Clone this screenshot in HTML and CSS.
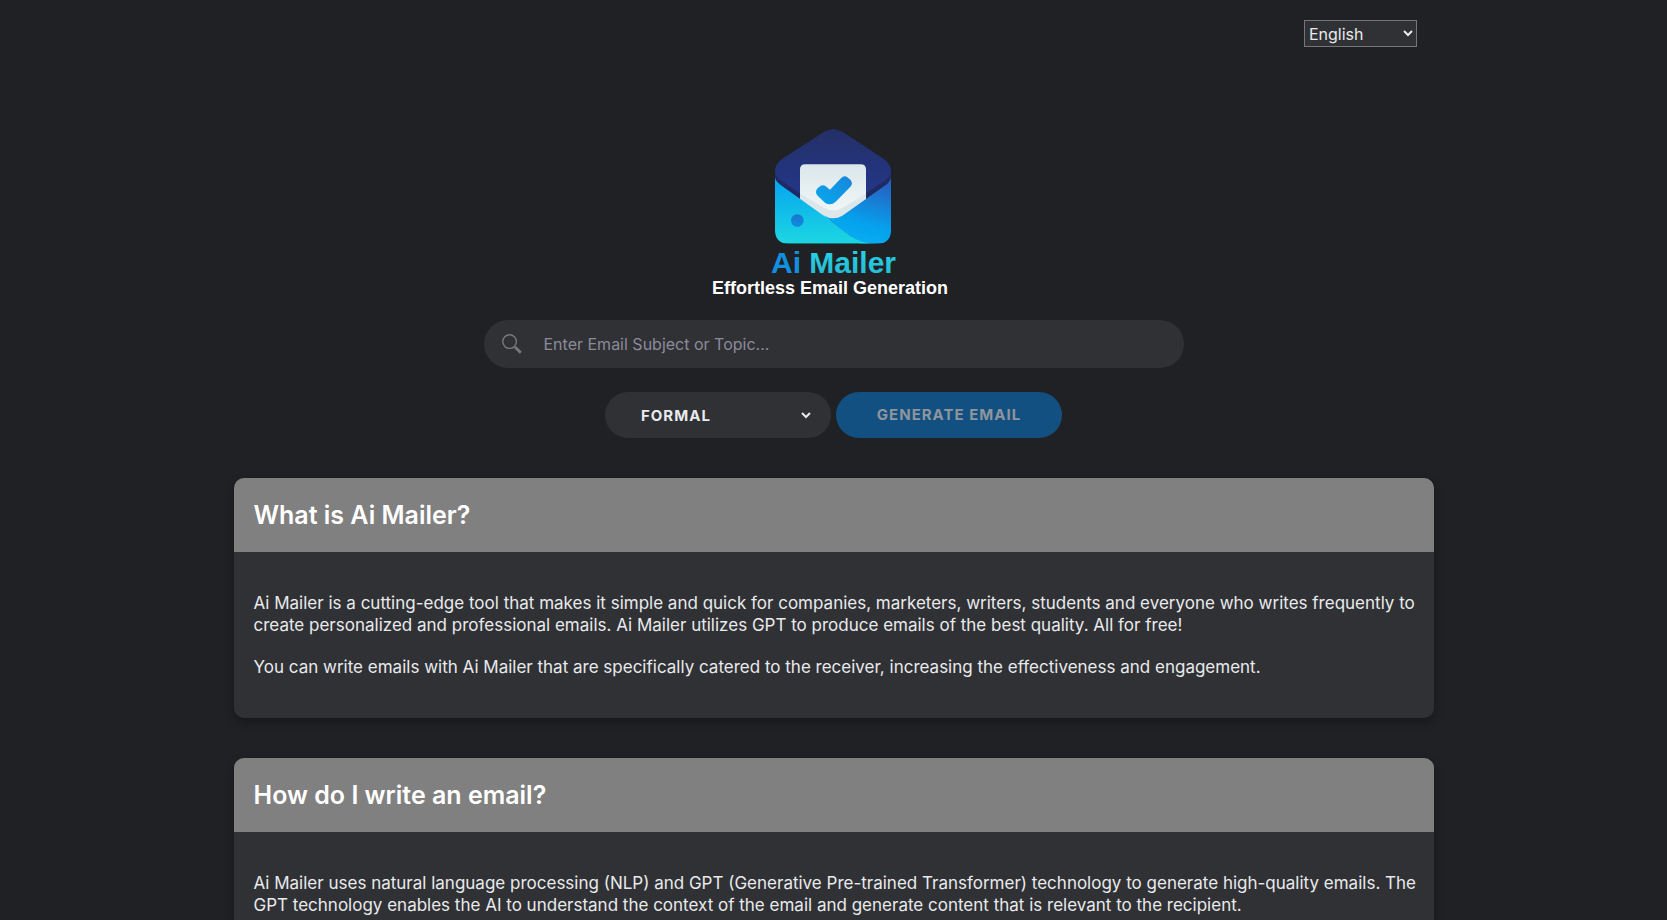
FILE: index.html
```html
<!DOCTYPE html>
<html lang="en">
<head>
    <meta charset="UTF-8">
    <meta name="viewport" content="width=device-width, initial-scale=1.0">
    <title>Ai Mailer</title>
    <link rel="stylesheet" href="styles.css">
</head>
<body>
    <header class="top-bar">
        <select class="language" aria-label="Language">
            <option>English</option>
            <option>Español</option>
            <option>Français</option>
            <option>Deutsch</option>
        </select>
    </header>

    <main class="container">
        <svg class="logo" width="270" height="200" viewBox="0 0 270 200" role="img" aria-label="Ai Mailer">
            <defs>
                <linearGradient id="flap" x1="0" y1="0" x2="0" y2="1">
                    <stop offset="0" stop-color="#233067"/>
                    <stop offset="1" stop-color="#24378f"/>
                </linearGradient>
                <linearGradient id="paper" x1="0" y1="0" x2="0" y2="1">
                    <stop offset="0" stop-color="#dbe7ea"/>
                    <stop offset="1" stop-color="#f4f9fa"/>
                </linearGradient>
                <linearGradient id="front" x1="0" y1="0" x2="0" y2="1">
                    <stop offset="0" stop-color="#04a2ef"/>
                    <stop offset="1" stop-color="#1dd7e2"/>
                </linearGradient>
                <linearGradient id="side" x1="0.8" y1="0" x2="0.5" y2="1">
                    <stop offset="0.1" stop-color="#2465c4"/>
                    <stop offset="0.7" stop-color="#05a2ee"/>
                    <stop offset="1" stop-color="#08aef0"/>
                </linearGradient>
                <linearGradient id="check" x1="0" y1="1" x2="1" y2="0">
                    <stop offset="0" stop-color="#06a9ed"/>
                    <stop offset="1" stop-color="#1a86da"/>
                </linearGradient>
                <linearGradient id="dot" x1="0" y1="0" x2="0" y2="1">
                    <stop offset="0" stop-color="#1976cd"/>
                    <stop offset="1" stop-color="#0d8de0"/>
                </linearGradient>
                <linearGradient id="word" x1="0" y1="0" x2="0" y2="1">
                    <stop offset="0" stop-color="#25d4e6"/>
                    <stop offset="1" stop-color="#27b8d2"/>
                </linearGradient>
                <clipPath id="body">
                    <path d="M225 180H573V359Q573 401 531 401H267Q225 401 225 359Z"/>
                </clipPath>
            </defs>
            <svg x="76" y="19" width="116" height="115" viewBox="225 57 348 344">
                <path fill="#1f2a63" d="M373 65Q400 50 427 65L548 144Q573 160 573 188V215L430 320H368L225 215V188Q225 160 250 144Z"/>
                <path fill="url(#flap)" d="M373 65Q400 50 427 65L548 144Q573 160 573 183Q573 199 552 213L498 249V290H300V249L246 213Q225 199 225 183Q225 160 250 144Z"/>
                <path fill="url(#paper)" d="M300 178Q300 162 316 162H482Q498 162 498 178V270L430 330H368L300 270Z"/>
                <path fill="#dde7e9" d="M300 250L370 291Q400 309 430 291L498 250V275L430 330H368L300 275Z"/>
                <path fill="url(#check)" d="M353 234L362 227Q370 222 378 229L390 239L423 204Q433 194 443 202L451 209Q460 219 452 229L407 275Q392 289 374 277L353 257Q343 245 353 234Z"/>
                <g clip-path="url(#body)">
                    <path fill="url(#side)" d="M573 200Q573 215 555 226L427 317Q399 333 370 315L480 401H573Z"/>
                    <path fill="url(#front)" d="M225 200Q225 213 243 225L370 316Q380 323 391 331L450 377Q480 400 531 401H225Z"/>
                </g>
                <circle fill="url(#dot)" cx="292" cy="331" r="19"/>
            </svg>
            <text class="logo-name" x="72" y="163"><tspan fill="#138fe0">Ai</tspan> <tspan fill="url(#word)">Mailer</tspan></text>
            <text class="logo-tagline" x="131" y="184" text-anchor="middle">Effortless Email Generation</text>
        </svg>

        <form class="mail-form">
            <label class="search">
                <svg class="search-icon" width="20" height="20" viewBox="0 0 20 20" aria-hidden="true">
                    <circle cx="7.6" cy="7.6" r="6.8" fill="none" stroke="#77787b" stroke-width="1.4"/>
                    <path d="M12.2 12.2L14 14" stroke="#77787b" stroke-width="1.4"/>
                    <path d="M13.2 13.2L18.8 18.8" stroke="#77787b" stroke-width="2.8"/>
                </svg>
                <input class="search-input" type="text" aria-label="Email subject" placeholder="Enter Email Subject or Topic...">
            </label>
            <div class="actions">
                <select class="pill tone" aria-label="Tone">
                    <option>FORMAL</option>
                    <option>FRIENDLY</option>
                    <option>CASUAL</option>
                </select>
                <button class="pill generate" type="submit" disabled>GENERATE EMAIL</button>
            </div>
        </form>

        <section class="card">
            <h2 class="card-title">What is Ai Mailer?</h2>
            <div class="card-body">
                <p>Ai Mailer is a cutting-edge tool that makes it simple and quick for companies, marketers, writers, students and everyone who writes frequently to create personalized and professional emails. Ai Mailer utilizes GPT to produce emails of the best quality. All for free!</p>
                <p>You can write emails with Ai Mailer that are specifically catered to the receiver, increasing the effectiveness and engagement.</p>
            </div>
        </section>

        <section class="card">
            <h2 class="card-title">How do I write an email?</h2>
            <div class="card-body">
                <p>Ai Mailer uses natural language processing (NLP) and GPT (Generative Pre-trained Transformer) technology to generate high-quality emails. The GPT technology enables the AI to understand the context of the email and generate content that is relevant to the recipient.</p>
            </div>
        </section>
    </main>
</body>
</html>
```
FILE: styles.css
```css
* {
    box-sizing: border-box;
}

body {
    margin: 0;
    background-color: #202124;
    color: #e8eaed;
    font-family: Inter, sans-serif;
    font-size: 16px;
    line-height: 22px;
}

.top-bar {
    display: flex;
    justify-content: flex-end;
    padding: 20px 15% 0;
}

.language {
    width: 113px;
    height: 27px;
    background-color: #303134;
    color: #e8eaed;
    border: 1px solid #767676;
    font: inherit;
}

.container {
    display: flex;
    flex-direction: column;
    align-items: center;
    max-width: 1200px;
    margin: 0 auto;
    padding-top: 63px;
}

.logo-name {
    font: bold 30px "Liberation Sans", sans-serif;
}

.logo-tagline {
    font: bold 18px "Liberation Sans", sans-serif;
    fill: #fff;
}

.mail-form {
    display: flex;
    flex-direction: column;
    align-items: center;
    gap: 24px;
    width: 100%;
    margin: 10px 0 40px;
}

.search {
    display: flex;
    align-items: center;
    gap: 20px;
    width: 100%;
    max-width: 700px;
    height: 48px;
    padding: 0 18px;
    background-color: #303134;
    border-radius: 24px;
}

.search-icon {
    flex: none;
}

.search-input {
    flex: 1;
    background: none;
    border: none;
    outline: none;
    color: #e8eaed;
    font: inherit;
}

.search-input::placeholder {
    color: #8b8b9b;
}

.actions {
    display: flex;
    gap: 5px;
}

.pill {
    width: 226px;
    height: 46px;
    border: none;
    border-radius: 23px;
    font: inherit;
    font-size: 15px;
    font-weight: 700;
    letter-spacing: 1px;
}

/* the transparent border moves the arrow away from the round edge */
.tone {
    padding: 0 0 0 32px;
    border-right: 17px solid transparent;
    background-color: #303134;
    color: #e8eaed;
}

.generate {
    background-color: #125082;
    color: #8f959c;
}

.card {
    width: 100%;
    margin-bottom: 40px;
    background-color: #303134;
    border-radius: 10px;
    box-shadow: 0 4px 10px rgba(0, 0, 0, 0.3);
    overflow: hidden;
}

.card-title {
    margin: 0;
    padding: 20px;
    background-color: #808080;
    color: #fff;
    font-size: 25px;
    font-weight: 600;
    line-height: 34px;
}

.card-body {
    padding: 20px 12px 20px 20px;
    font-size: 17px;
}

.card-body p {
    margin: 20px 0;
}
```
